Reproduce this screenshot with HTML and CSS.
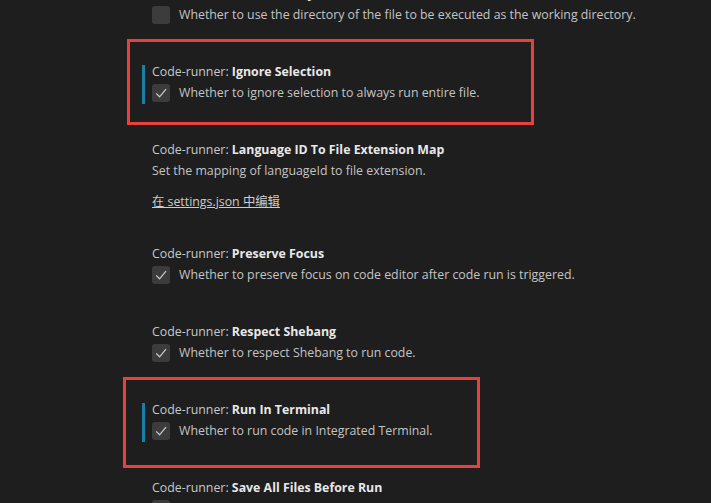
FILE: index.html
```html
<!DOCTYPE html>
<html>
<head>
<meta charset="utf-8">
<link rel="stylesheet" href="styles.css">
</head>
<body>
<div class="list">
  <div class="item">
    <div class="title"><span class="cat">Code-runner: </span><span class="label">File Directory As Cwd</span></div>
    <div class="row"><span class="cb"></span><span class="desc">Whether to use the directory of the file to be executed as the working directory.</span></div>
  </div>
  <div class="item focused">
    <div class="title"><span class="cat">Code-runner: </span><span class="label">Ignore Selection</span></div>
    <div class="row"><span class="cb checked"><svg viewBox="0 0 18 18" width="18" height="18"><path d="M4.2 9.4 L7.6 12.8 L14 5.2" fill="none" stroke="#c8c8c8" stroke-width="1.3"/></svg></span><span class="desc">Whether to ignore selection to always run entire file.</span></div>
  </div>
  <div class="item map">
    <div class="title"><span class="cat">Code-runner: </span><span class="label">Language ID To File Extension Map</span></div>
    <div class="plain-desc">Set the mapping of languageId to file extension.</div>
    <a class="link" href="#">在 settings.json 中编辑</a>
  </div>
  <div class="item">
    <div class="title"><span class="cat">Code-runner: </span><span class="label">Preserve Focus</span></div>
    <div class="row"><span class="cb checked"><svg viewBox="0 0 18 18" width="18" height="18"><path d="M4.2 9.4 L7.6 12.8 L14 5.2" fill="none" stroke="#c8c8c8" stroke-width="1.3"/></svg></span><span class="desc">Whether to preserve focus on code editor after code run is triggered.</span></div>
  </div>
  <div class="item">
    <div class="title"><span class="cat">Code-runner: </span><span class="label">Respect Shebang</span></div>
    <div class="row"><span class="cb checked"><svg viewBox="0 0 18 18" width="18" height="18"><path d="M4.2 9.4 L7.6 12.8 L14 5.2" fill="none" stroke="#c8c8c8" stroke-width="1.3"/></svg></span><span class="desc">Whether to respect Shebang to run code.</span></div>
  </div>
  <div class="item focused">
    <div class="title"><span class="cat">Code-runner: </span><span class="label">Run In Terminal</span></div>
    <div class="row"><span class="cb checked"><svg viewBox="0 0 18 18" width="18" height="18"><path d="M4.2 9.4 L7.6 12.8 L14 5.2" fill="none" stroke="#c8c8c8" stroke-width="1.3"/></svg></span><span class="desc">Whether to run code in Integrated Terminal.</span></div>
  </div>
  <div class="item">
    <div class="title"><span class="cat">Code-runner: </span><span class="label">Save All Files Before Run</span></div>
    <div class="row"><span class="cb"></span><span class="desc">Whether to save all files before running.</span></div>
  </div>
</div>
<div class="mark mark-1"></div>
<div class="mark mark-2"></div>
</body>
</html>
```
FILE: styles.css
```css
html, body {
  margin: 0;
  padding: 0;
  background: #1e1e1e;
  overflow: hidden;
  height: 503px;
}
body {
  position: relative;
  font-family: "Open Sans", "Noto Sans CJK SC", sans-serif;
  font-size: 12.35px;
  color: #cccccc;
}
.list {
  margin-top: -27px;
  padding-left: 152px;
}
.item {
  position: relative;
  padding: 12px 0 27px 0;
}
.item.map {
  padding-bottom: 22px;
}
.focused::before {
  content: "";
  position: absolute;
  left: -10px;
  top: 14px;
  width: 3px;
  height: 39px;
  background: #1a7fa6;
}
.title {
  height: 18px;
  line-height: 18px;
  white-space: nowrap;
}
.cat {
  color: #c8c8c8;
}
.label {
  font-weight: 700;
  color: #e8e8e8;
}
.row {
  margin-top: 3px;
  display: flex;
  align-items: center;
  height: 18px;
  gap: 9px;
}
.cb {
  width: 18px;
  height: 18px;
  border-radius: 3px;
  background: #3c3c3c;
  flex: none;
  display: block;
}
.cb svg {
  display: block;
}
.desc, .plain-desc {
  line-height: 18px;
  color: #c4c4c4;
  white-space: nowrap;
}
.plain-desc {
  margin-top: 3px;
}
.link {
  display: inline-block;
  margin-top: 13px;
  line-height: 18px;
  color: #cccccc;
  text-decoration: underline;
}
.mark {
  position: absolute;
  border: 3px solid #e8403d;
  box-sizing: border-box;
}
.mark-1 {
  left: 127px;
  top: 39px;
  width: 407px;
  height: 86px;
}
.mark-2 {
  left: 123px;
  top: 377px;
  width: 357px;
  height: 91px;
}
```
